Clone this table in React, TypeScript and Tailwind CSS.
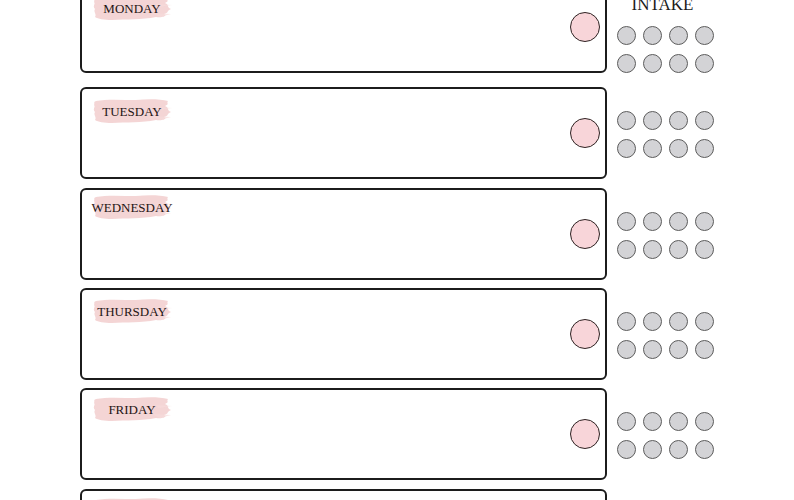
const days = [
  { name: "MONDAY", mt: "mt-[-19px]", labelTop: "mt-[12px]", intake: true },
  { name: "TUESDAY", mt: "mt-[14px]", labelTop: "mt-[9px]", intake: false },
  { name: "WEDNESDAY", mt: "mt-[9px]", labelTop: "mt-[4px]", intake: false },
  { name: "THURSDAY", mt: "mt-[8px]", labelTop: "mt-[8px]", intake: false },
  { name: "FRIDAY", mt: "mt-[8px]", labelTop: "mt-[6px]", intake: false },
  { name: "SATURDAY", mt: "mt-[9px]", labelTop: "mt-[6px]", intake: false },
];

function Brush() {
  return (
    <svg
      className="absolute inset-0 w-full h-full blur-[0.6px]"
      viewBox="0 0 80 26"
      preserveAspectRatio="none"
    >
      <path
        d="M4 3 C14 1 30 2 44 2 C56 1 68 1 76 3 C74 5 78 6 73 8 C78 10 74 12 79 14 C74 16 77 18 72 19 C76 21 70 23 64 22 C50 25 34 24 20 25 C12 25 6 24 3 22 C5 19 1 17 3 14 C0 11 4 9 2 7 C3 5 1 4 4 3 Z"
        fill="#f3d0d0"
        opacity="0.9"
      />
      <path d="M60 18 L79 19 L68 22 Z" fill="#f6dcdc" opacity="0.7" />
      <path d="M64 9 L80 10 L66 12 Z" fill="#f6dcdc" opacity="0.6" />
    </svg>
  );
}

function Dots() {
  return (
    <div className="grid grid-cols-4 gap-x-[7px] gap-y-[9px] w-[97px]">
      {Array.from({ length: 8 }).map((_, i) => (
        <div
          key={i}
          className="w-[19px] h-[19px] rounded-full bg-[#d3d3d6] border border-[#5c5c5c]"
        />
      ))}
    </div>
  );
}

export default function App() {
  return (
    <div className="w-[794px] h-[500px] overflow-hidden bg-white">
      <div className="flex flex-col pl-[80px]">
        {days.map((d) => (
          <div key={d.name} className={`flex flex-row ${d.mt}`}>
            <div className="w-[527px] h-[92px] shrink-0 border-2 border-[#1c1c1c] rounded-[6px] flex flex-row items-start justify-between">
              <div className={`relative w-[80px] h-[26px] ml-[10px] ${d.labelTop} flex items-center justify-center`}>
                <Brush />
                <span className="relative whitespace-nowrap text-[13px] leading-none text-[#1f1414] font-['Liberation_Serif',serif]">
                  {d.name}
                </span>
              </div>
              <div className="self-center mr-[5px] w-[30px] h-[30px] rounded-full bg-[#f8d5d9] border-[1.5px] border-[#2e2222]" />
            </div>
            <div className="ml-[10px] flex flex-col items-center w-[97px]">
              {d.intake ? (
                <>
                  <div className="mt-[15px] text-[17px] leading-[17px] text-[#1c1c1c] font-['Liberation_Serif',serif] pr-[6px]">
                    INTAKE
                  </div>
                  <div className="mt-[13px]">
                    <Dots />
                  </div>
                </>
              ) : (
                <div className="mt-[24px]">
                  <Dots />
                </div>
              )}
            </div>
          </div>
        ))}
      </div>
    </div>
  );
}
